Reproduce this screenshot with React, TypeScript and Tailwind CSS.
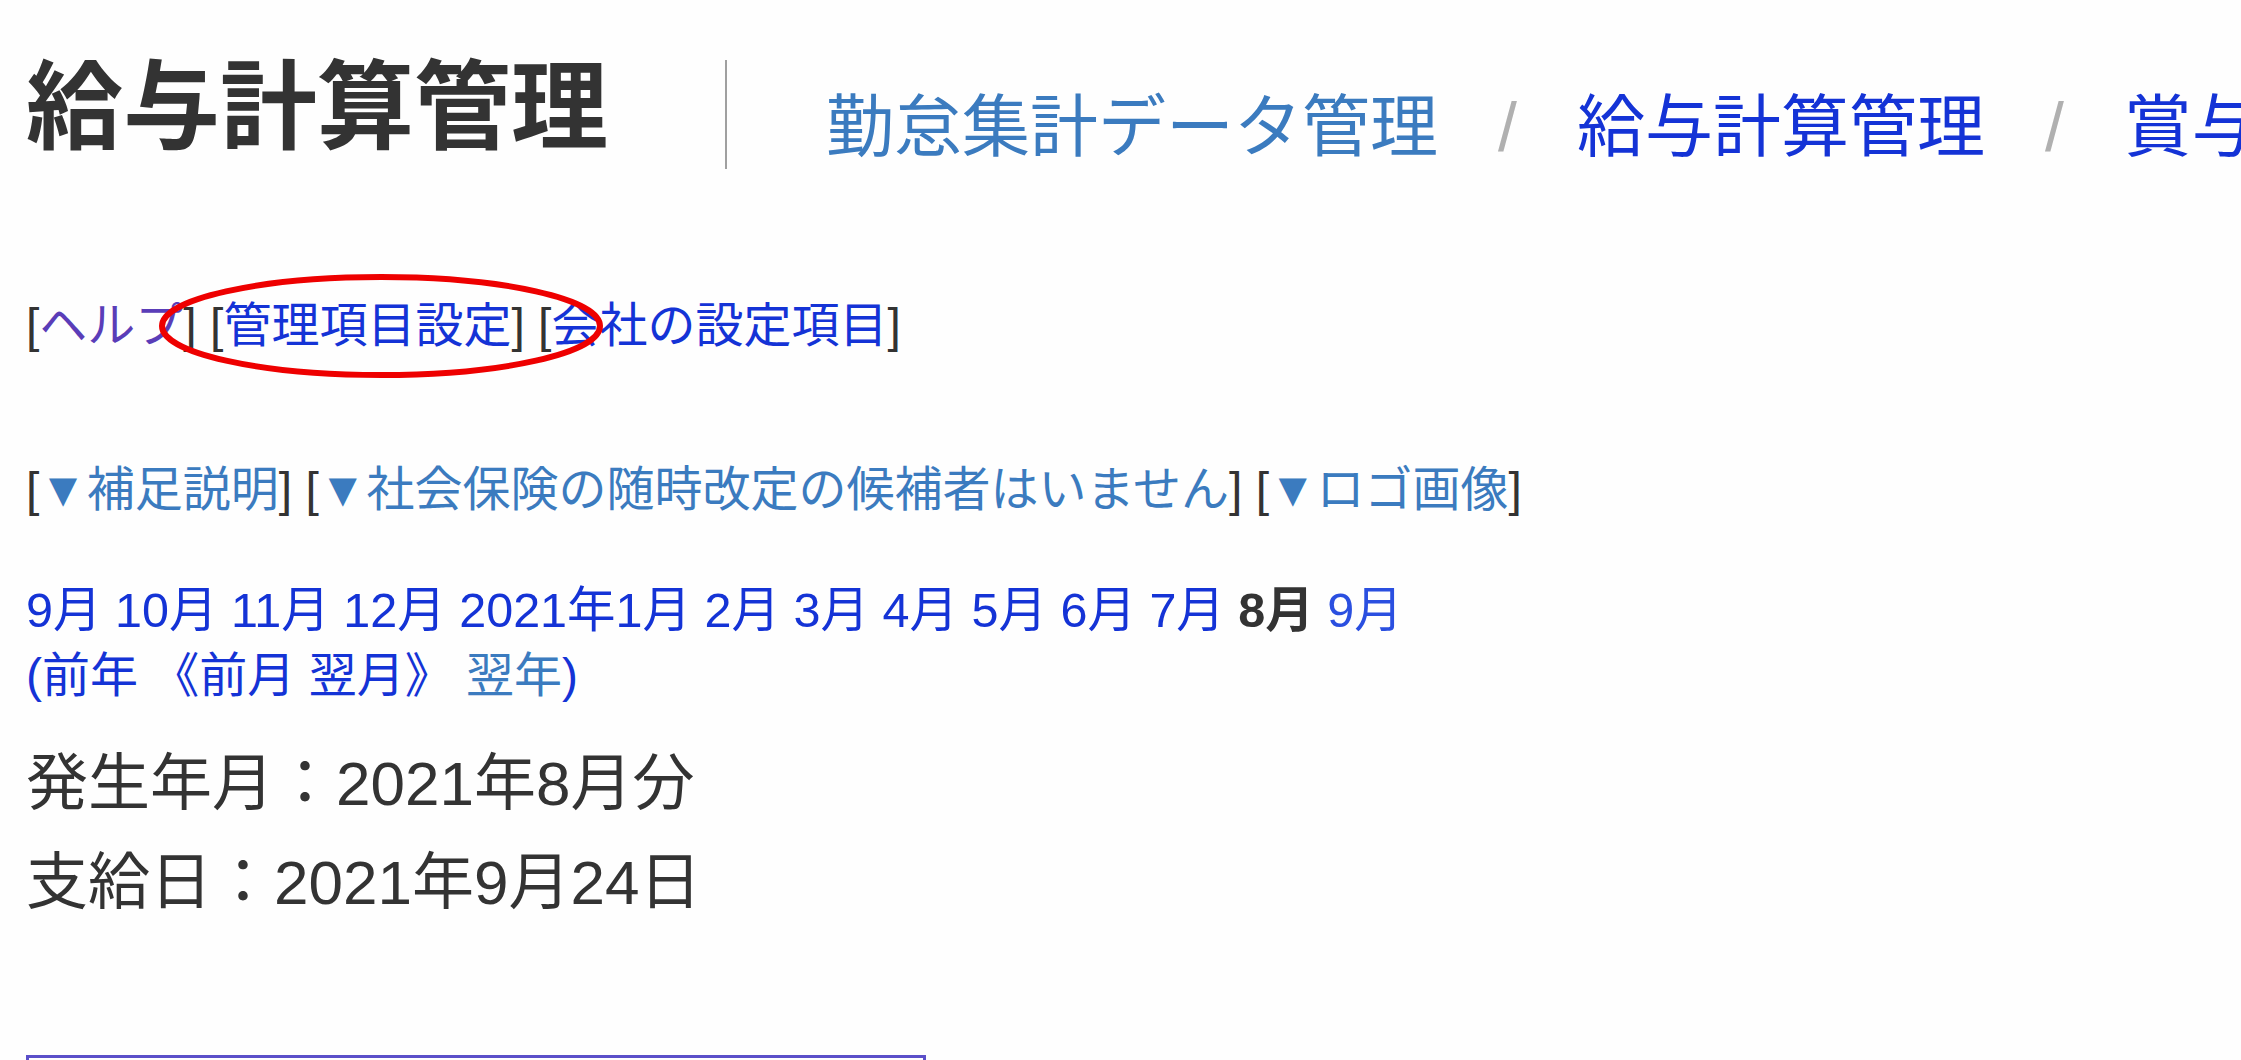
import React from "react";

const font = { fontFamily: '"Liberation Sans", "Noto Sans CJK JP", sans-serif' };

const months = ["9月", "10月", "11月", "12月", "2021年1月", "2月", "3月", "4月", "5月", "6月", "7月"];

const Bracket = ({ children, color }: { children: React.ReactNode; color: string }) => (
  <span>
    <span className="text-[#333]">[</span>
    <span className={color}>{children}</span>
    <span className="text-[#333]">]</span>
  </span>
);

export default function App() {
  return (
    <div
      className="h-[1060px] overflow-hidden bg-[#fefefe] pl-[26px] whitespace-nowrap"
      style={font}
    >
      {/* header */}
      <div className="flex items-start pt-[59px]">
        <h1 className="shrink-0 text-[97px] leading-[97px] font-bold text-[#333]">給与計算管理</h1>
        <div className="ml-[117px] mt-[1px] h-[109px] w-[2px] shrink-0 bg-[#a0a0a0]" />
        <nav className="ml-[99px] mt-[34px] flex shrink-0 text-[68px] leading-[68px]">
          <a className="text-[#3b7bbf]">勤怠集計データ管理</a>
          <span className="px-[60px] text-[#b0b0b0]">/</span>
          <a className="text-[#1433d6]">給与計算管理</a>
          <span className="px-[60px] text-[#b0b0b0]">/</span>
          <a className="text-[#1433d6]">賞与計算管理</a>
        </nav>
      </div>

      {/* settings links */}
      <div className="relative mt-[127px] text-[48px] leading-[60px]">
        <Bracket color="text-[#5a3db8]">ヘルプ</Bracket>{" "}
        <Bracket color="text-[#1433d6]">管理項目設定</Bracket>{" "}
        <Bracket color="text-[#1433d6]">会社の設定項目</Bracket>
        <svg
          className="absolute left-[132px] top-[-23px]"
          width="446"
          height="106"
          viewBox="0 0 446 106"
        >
          <ellipse cx="223" cy="53" rx="219" ry="49" fill="none" stroke="#ee0000" strokeWidth="6" />
        </svg>
      </div>

      {/* toggles */}
      <div className="mt-[104px] text-[48px] leading-[60px]">
        <Bracket color="text-[#3b7bbf]">▼補足説明</Bracket>{" "}
        <Bracket color="text-[#3b7bbf]">▼社会保険の随時改定の候補者はいません</Bracket>{" "}
        <Bracket color="text-[#3b7bbf]">▼ロゴ画像</Bracket>
      </div>

      {/* month selector */}
      <div className="mt-[57px] text-[48px] leading-[66px]">
        <div className="text-[48.5px]">
          {months.map((m) => (
            <span key={m}>
              <a className="text-[#1433d6]">{m}</a>{" "}
            </span>
          ))}
          <b className="text-[#333]">8月</b> <a className="text-[#2a4fe0]">9月</a>
        </div>
        <div className="text-[#1433d6]">
          (前年 《前月 翌月》 <span className="text-[#3b7bbf]">翌年</span>)
        </div>
      </div>

      {/* dates */}
      <div className="mt-[25px] text-[62px] leading-[99px] text-[#333]">
        <div>発生年月：2021年8月分</div>
        <div>支給日：2021年9月24日</div>
      </div>

      <div className="mt-[123px] h-[200px] w-[900px] border-[3px] border-[#5b4fc9]" />
    </div>
  );
}
